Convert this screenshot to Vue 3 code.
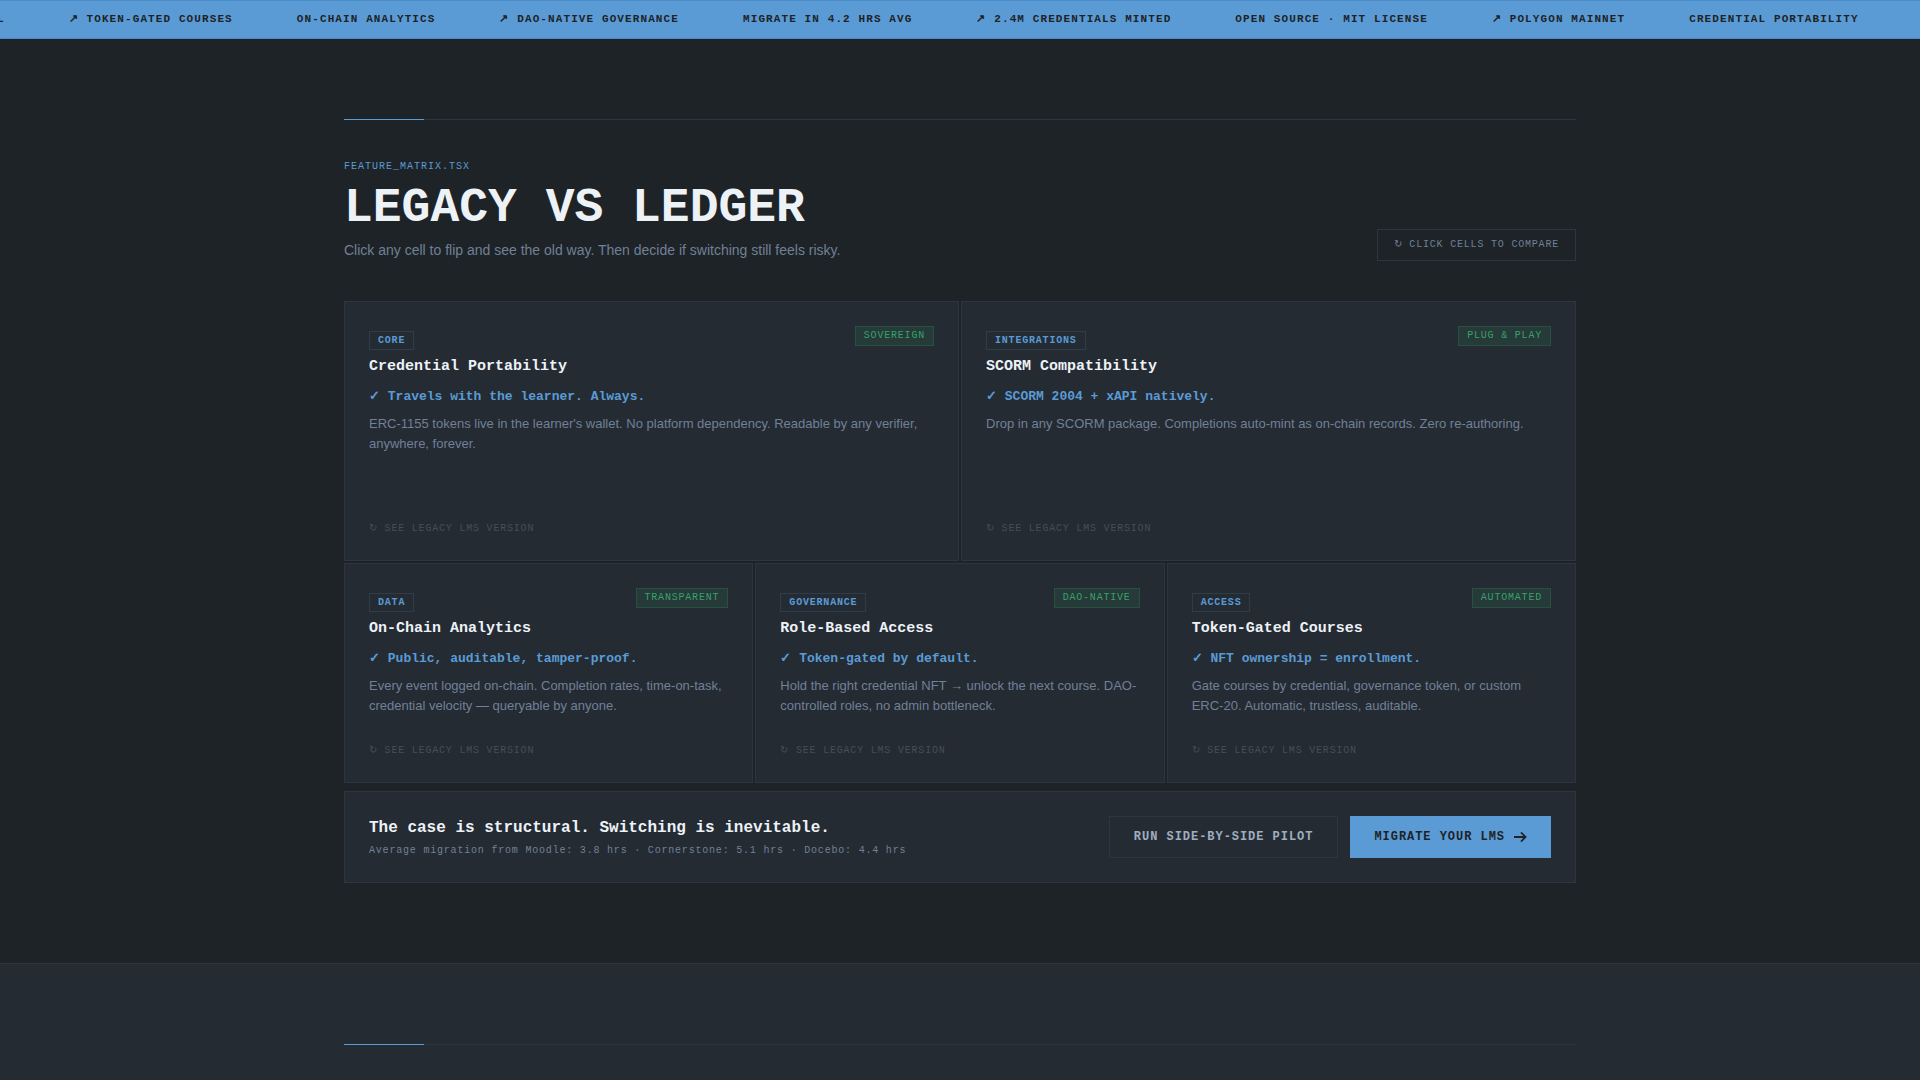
<script setup>
import { ref } from 'vue'

const tickerItems = [
  'L',
  '↗ TOKEN-GATED COURSES',
  'ON-CHAIN ANALYTICS',
  '↗ DAO-NATIVE GOVERNANCE',
  'MIGRATE IN 4.2 HRS AVG',
  '↗ 2.4M CREDENTIALS MINTED',
  'OPEN SOURCE · MIT LICENSE',
  '↗ POLYGON MAINNET',
  'CREDENTIAL PORTABILITY'
]

const features = ref([
  {
    tag: 'CORE',
    badge: 'SOVEREIGN',
    title: 'Credential Portability',
    claim: 'Travels with the learner. Always.',
    text: "ERC-1155 tokens live in the learner's wallet. No platform dependency. Readable by any verifier, anywhere, forever.",
    wide: true
  },
  {
    tag: 'INTEGRATIONS',
    badge: 'PLUG & PLAY',
    title: 'SCORM Compatibility',
    claim: 'SCORM 2004 + xAPI natively.',
    text: 'Drop in any SCORM package. Completions auto-mint as on-chain records. Zero re-authoring.',
    wide: true
  },
  {
    tag: 'DATA',
    badge: 'TRANSPARENT',
    title: 'On-Chain Analytics',
    claim: 'Public, auditable, tamper-proof.',
    text: 'Every event logged on-chain. Completion rates, time-on-task, credential velocity — queryable by anyone.'
  },
  {
    tag: 'GOVERNANCE',
    badge: 'DAO-NATIVE',
    title: 'Role-Based Access',
    claim: 'Token-gated by default.',
    text: 'Hold the right credential NFT → unlock the next course. DAO-controlled roles, no admin bottleneck.'
  },
  {
    tag: 'ACCESS',
    badge: 'AUTOMATED',
    title: 'Token-Gated Courses',
    claim: 'NFT ownership = enrollment.',
    text: 'Gate courses by credential, governance token, or custom ERC-20. Automatic, trustless, auditable.'
  }
])
</script>

<template>
  <div class="page">
    <div class="ticker">
      <div class="ticker__track">
        <span v-for="item in tickerItems" :key="item" class="ticker__item">{{ item }}</span>
      </div>
    </div>

    <section class="section">
      <div class="container">
        <div class="divider"></div>

        <header class="head">
          <div>
            <p class="head__label">FEATURE_MATRIX.TSX</p>
            <h1 class="head__title">LEGACY VS LEDGER</h1>
            <p class="head__text">Click any cell to flip and see the old way. Then decide if switching still feels risky.</p>
          </div>
          <p class="hint">↻ CLICK CELLS TO COMPARE</p>
        </header>

        <div class="grid">
          <article
            v-for="feature in features"
            :key="feature.tag"
            class="card"
            :class="{ 'card--wide': feature.wide }"
          >
            <div class="card__top">
              <div class="card__heading">
                <span class="tag">{{ feature.tag }}</span>
                <h2 class="card__title">{{ feature.title }}</h2>
              </div>
              <span class="badge">{{ feature.badge }}</span>
            </div>
            <p class="card__claim">✓ {{ feature.claim }}</p>
            <p class="card__text">{{ feature.text }}</p>
            <button type="button" class="card__flip">↻ SEE LEGACY LMS VERSION</button>
          </article>
        </div>

        <div class="banner">
          <div>
            <h2 class="banner__title">The case is structural. Switching is inevitable.</h2>
            <p class="banner__text">Average migration from Moodle: 3.8 hrs · Cornerstone: 5.1 hrs · Docebo: 4.4 hrs</p>
          </div>
          <div class="banner__actions">
            <button type="button" class="btn btn--ghost">RUN SIDE-BY-SIDE PILOT</button>
            <button type="button" class="btn btn--primary">
              MIGRATE YOUR LMS
              <svg width="14" height="14" viewBox="0 0 14 14" fill="none" stroke="currentColor" stroke-width="1.8" aria-hidden="true">
                <path d="M1 7h11.5M8 2.4l4.6 4.6L8 11.6" />
              </svg>
            </button>
          </div>
        </div>
      </div>
    </section>

    <section class="section section--alt">
      <div class="container">
        <div class="divider"></div>
      </div>
    </section>
  </div>
</template>

<style>
body {
  margin: 0;
  background: #1e2327;
}
</style>

<style scoped>
.page {
  --bg: #1e2327;
  --panel: #242b33;
  --line: #2d3640;
  --blue: #5b9bd5;
  --muted: #718096;
  --mono: "Liberation Mono", sans-serif;

  height: 100vh;
  overflow: hidden;
  background: var(--bg);
  color: #edf2f7;
  font-family: "Liberation Sans", Arial, sans-serif;
}

h1,
h2,
p {
  margin: 0;
}

/* ticker */
.ticker {
  overflow: hidden;
  background: var(--blue);
  border-top: 1px solid #4a8bc6;
  border-bottom: 1px solid #4a8bc6;
}

.ticker__track {
  display: flex;
  width: max-content;
  margin-left: -35px;
  padding: 10px 0;
}

.ticker__item {
  padding: 0 32px;
  font: bold 11px/17px var(--mono);
  letter-spacing: 0.1em;
  color: var(--bg);
  white-space: nowrap;
}

/* sections */
.section {
  padding: 80px 0;
}

.section--alt {
  background: var(--panel);
  border-top: 1px solid var(--line);
}

.container {
  max-width: 1232px;
  margin: 0 auto;
  padding: 0 24px;
}

.divider {
  height: 1px;
  background: linear-gradient(to right, var(--blue) 80px, var(--line) 80px);
}

.head {
  display: flex;
  justify-content: space-between;
  align-items: flex-end;
  gap: 24px;
  margin: 40px 0;
}

.head__label {
  font: 10px/14px var(--mono);
  letter-spacing: 0.1em;
  color: var(--blue);
}

.head__title {
  margin: 10px 0 8px;
  font: bold 48px/48px var(--mono);
}

.head__text {
  font-size: 14px;
  line-height: 21px;
  color: var(--muted);
}

.hint {
  padding: 7px 16px;
  border: 1px solid var(--line);
  font: 10px/16px var(--mono);
  letter-spacing: 0.08em;
  color: var(--muted);
  white-space: nowrap;
}

/* feature cards */
.grid {
  display: grid;
  grid-template-columns: repeat(6, 1fr);
  gap: 2px;
}

.card {
  grid-column: span 2;
  box-sizing: border-box;
  display: flex;
  flex-direction: column;
  align-items: flex-start;
  min-height: 220px;
  padding: 24px;
  background: var(--panel);
  border: 1px solid var(--line);
}

.card--wide {
  grid-column: span 3;
  min-height: 260px;
}

.card__top {
  display: flex;
  justify-content: space-between;
  align-items: flex-start;
  align-self: stretch;
}

.card__heading {
  display: flex;
  flex-direction: column;
  align-items: flex-start;
  gap: 5px;
  padding-top: 5px;
}

.tag {
  padding: 2px 8px;
  border: 1px solid #2f3c4a;
  font: bold 10px/13px var(--mono);
  letter-spacing: 0.08em;
  color: var(--blue);
}

.badge {
  padding: 2px 8px;
  border: 1px solid #28523f;
  background: #263a3a;
  font: 10px/14px var(--mono);
  letter-spacing: 0.08em;
  color: #38a169;
  white-space: nowrap;
}

.card__title {
  font: bold 15px/24px var(--mono);
}

.card__claim {
  margin: 8px 0 7px;
  font: bold 13px/20px var(--mono);
  color: var(--blue);
}

.card__text {
  font-size: 13px;
  line-height: 20px;
  color: var(--muted);
}

.card__flip {
  margin-top: auto;
  padding: 0;
  border: 0;
  background: none;
  font: 10px/14px var(--mono);
  letter-spacing: 0.08em;
  color: #454e5a;
  cursor: pointer;
}

/* call to action */
.banner {
  display: flex;
  justify-content: space-between;
  align-items: center;
  gap: 24px;
  margin-top: 8px;
  padding: 24px;
  background: var(--panel);
  border: 1px solid var(--line);
}

.banner__title {
  margin-bottom: 4px;
  font: bold 16px/24px var(--mono);
}

.banner__text {
  font: 10px/14px var(--mono);
  letter-spacing: 0.08em;
  color: var(--muted);
}

.banner__actions {
  display: flex;
  gap: 12px;
}

.btn {
  display: flex;
  align-items: center;
  gap: 8px;
  height: 42px;
  padding: 0 24px;
  border: 0;
  font: bold 12px/18px var(--mono);
  letter-spacing: 0.08em;
  white-space: nowrap;
  cursor: pointer;
}

.btn--ghost {
  border: 1px solid var(--line);
  background: transparent;
  color: #a0aec0;
}

.btn--primary {
  background: var(--blue);
  color: var(--bg);
}
</style>
